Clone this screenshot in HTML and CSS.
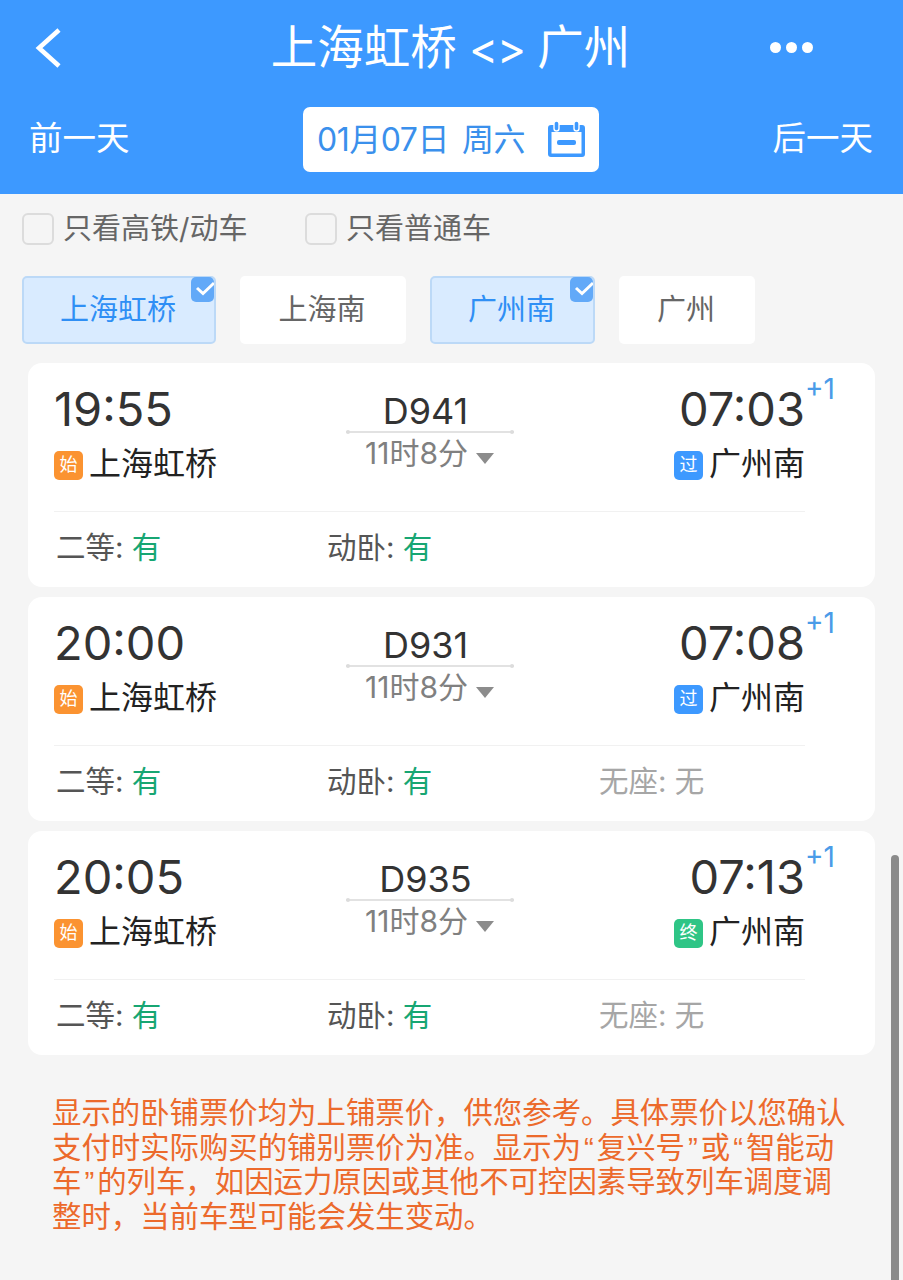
FILE: index.html
```html
<!DOCTYPE html>
<html lang="zh">
<head>
<meta charset="utf-8">
<title>上海虹桥 &lt;&gt; 广州</title>
<link rel="stylesheet" href="styles.css">
</head>
<body>
<header class="head">
  <div class="head-top">
    <svg class="back" viewBox="0 0 30 42" width="30" height="42"><path d="M26 3 L6 21 L26 39" fill="none" stroke="#fff" stroke-width="4.6"/></svg>
    <div class="title">上海虹桥 <span class="arrows">&lt;&gt;</span> 广州</div>
    <div class="more"><i></i><i></i><i></i></div>
  </div>
  <div class="head-date">
    <span class="day-link">前一天</span>
    <div class="date-box">
      <span class="date-text">01月07日<span class="week">周六</span></span>
      <svg class="cal" viewBox="0 0 37 37" width="37" height="37"><path d="M0 7 a3 3 0 0 1 3-3 h31 a3 3 0 0 1 3 3 v26 a3 3 0 0 1-3 3 h-31 a3 3 0 0 1-3-3 z M3.5 11 v21.5 h30 v-21.5 z" fill="#3d99ff" fill-rule="evenodd"/><rect x="6" y="0" width="5" height="10" rx="2.5" fill="#3d99ff" stroke="#fff" stroke-width="1.4"/><rect x="26" y="0" width="5" height="10" rx="2.5" fill="#3d99ff" stroke="#fff" stroke-width="1.4"/><rect x="9" y="19" width="19" height="5" rx="2" fill="#3d99ff"/></svg>
    </div>
    <span class="day-link">后一天</span>
  </div>
</header>

<div class="checks">
  <label class="check check-a"><i class="box"></i><span class="check-text">只看高铁/动车</span></label>
  <label class="check"><i class="box"></i><span class="check-text">只看普通车</span></label>
</div>

<div class="tags">
  <div class="tag tag-on tag-w1">上海虹桥<span class="tick"><svg viewBox="0 0 23 25" width="23" height="25"><path d="M6 11 L12 16.5 L23 6" fill="none" stroke="#fff" stroke-width="3"/></svg></span></div>
  <div class="tag tag-w2">上海南</div>
  <div class="tag tag-on tag-w3">广州南<span class="tick"><svg viewBox="0 0 23 25" width="23" height="25"><path d="M6 11 L12 16.5 L23 6" fill="none" stroke="#fff" stroke-width="3"/></svg></span></div>
  <div class="tag tag-w4">广州</div>
</div>

<main class="list">
  <article class="card">
    <div class="route">
      <div class="end">
        <div class="time">19:55</div>
        <div class="station"><b class="mark mark-o">始</b>上海虹桥</div>
      </div>
      <div class="mid">
        <div class="no">D941</div>
        <div class="rail"></div>
        <div class="dur">11时8分<i class="caret"></i></div>
      </div>
      <div class="end end-r">
        <div class="time">07:03<sup class="plus">+1</sup></div>
        <div class="station"><b class="mark mark-b">过</b>广州南</div>
      </div>
    </div>
    <div class="seats">
      <span class="seat">二等: <em>有</em></span>
      <span class="seat">动卧: <em>有</em></span>
    </div>
  </article>

  <article class="card">
    <div class="route">
      <div class="end">
        <div class="time">20:00</div>
        <div class="station"><b class="mark mark-o">始</b>上海虹桥</div>
      </div>
      <div class="mid">
        <div class="no">D931</div>
        <div class="rail"></div>
        <div class="dur">11时8分<i class="caret"></i></div>
      </div>
      <div class="end end-r">
        <div class="time">07:08<sup class="plus">+1</sup></div>
        <div class="station"><b class="mark mark-b">过</b>广州南</div>
      </div>
    </div>
    <div class="seats">
      <span class="seat">二等: <em>有</em></span>
      <span class="seat">动卧: <em>有</em></span>
      <span class="seat seat-none">无座: 无</span>
    </div>
  </article>

  <article class="card">
    <div class="route">
      <div class="end">
        <div class="time">20:05</div>
        <div class="station"><b class="mark mark-o">始</b>上海虹桥</div>
      </div>
      <div class="mid">
        <div class="no">D935</div>
        <div class="rail"></div>
        <div class="dur">11时8分<i class="caret"></i></div>
      </div>
      <div class="end end-r">
        <div class="time">07:13<sup class="plus">+1</sup></div>
        <div class="station"><b class="mark mark-g">终</b>广州南</div>
      </div>
    </div>
    <div class="seats">
      <span class="seat">二等: <em>有</em></span>
      <span class="seat">动卧: <em>有</em></span>
      <span class="seat seat-none">无座: 无</span>
    </div>
  </article>
</main>

<p class="notice">显示的卧铺票价均为上铺票价，供您参考。具体票价以您确认支付时实际购买的铺别票价为准。显示为<span class="q">“</span>复兴号<span class="q">”</span>或<span class="q">“</span>智能动车<span class="q">”</span>的列车，如因运力原因或其他不可控因素导致列车调度调整时，当前车型可能会发生变动。</p>

<div class="scrollbar"></div>
</body>
</html>
```
FILE: styles.css
```css
* { box-sizing: border-box; }
html, body { margin: 0; padding: 0; }
body {
  width: 903px;
  height: 1280px;
  overflow: hidden;
  position: relative;
  background: #f5f5f5;
  font-family: Inter, "Noto Sans CJK SC", "Noto Sans", sans-serif;
  color: #333;
}
i, em, b { font-style: normal; font-weight: 400; }

.head { height: 194px; background: #3d99ff; color: #fff; padding: 0 30px; }
.head-top { height: 107px; display: grid; grid-template-columns: 1fr auto 1fr; align-items: center; padding-bottom: 12px; }
.back { margin-left: 3px; }
.title { font-size: 46.5px; line-height: 60px; font-weight: 400; word-spacing: -1px; margin-right: 2px; }
.arrows { font-size: 44px; letter-spacing: -1px; }
.more { justify-self: end; display: flex; gap: 5px; margin-right: 60px; }
.more i { width: 11px; height: 11px; border-radius: 50%; background: #fff; }
.head-date { display: flex; justify-content: space-between; align-items: center; }
.day-link { font-size: 33.5px; line-height: 62px; height: 65px; font-weight: 400; }
.day-link:first-child { margin-left: -1px; }
.date-box {
  width: 296px; height: 65px;
  background: #fff; border-radius: 7px; color: #3a90ec;
  font-size: 32px; display: flex; align-items: center; justify-content: space-between;
  padding: 0 14px 0 14px;
}
.date-text { letter-spacing: -0.5px; padding-bottom: 5px; }
.week { margin-left: 13px; }

.checks { display: flex; padding: 19px 0 0 22px; height: 82px; }
.check { display: flex; align-items: center; height: 32px; font-size: 29px; color: #666; gap: 9px; }
.check-a { width: 283px; }
.check-text { padding-bottom: 6px; }
.box { width: 32px; height: 32px; border: 2px solid #dcdcdc; border-radius: 6px; }

.tags { display: flex; padding-left: 22px; gap: 24px; }
.tag {
  position: relative; height: 68px; border-radius: 5px; background: #fff;
  color: #666; font-size: 29px; display: flex; align-items: center; justify-content: center;
  padding: 0 2px 6px 0;
}
.tag-on { background: #d9ebff; color: #2f8ff5; border: 2px solid #bcd9f7; padding-bottom: 6px; }
.tag-w1 { width: 194px; }
.tag-w2 { width: 166px; }
.tag-w3 { width: 165px; }
.tag-w4 { width: 136px; }
.tick {
  position: absolute; top: -1px; right: 0; width: 23px; height: 25px;
  background: #62a9f8; border-radius: 5px; overflow: hidden;
}
.tick svg { display: block; }

.list { padding: 19px 28px 0; display: flex; flex-direction: column; gap: 10px; }
.card { height: 224px; background: #fff; border-radius: 14px; padding: 0 70px 0 26px; }
.route {
  height: 149px; border-bottom: 1px solid #f1f1f1;
  display: grid; grid-template-columns: 1fr 168px 1fr; padding-top: 16px;
}
.end { min-width: 0; }
.end-r { text-align: right; }
.time { position: relative; font-size: 47px; line-height: 60px; color: #333; }
.plus { position: absolute; left: 100%; top: -7px; font-size: 28px; line-height: 34px; color: #4a9be8; vertical-align: baseline; font-weight: 400; }
.end-r .time { display: inline-block; }
.station { font-size: 32px; line-height: 44px; color: #222; display: flex; align-items: center; gap: 6px; height: 44px; margin-top: 3px; }
.station .mark { margin-top: 3px; }
.end-r .station { justify-content: flex-end; }
.mark {
  width: 29px; height: 29px; border-radius: 5px; color: #fff; font-size: 18px; line-height: 27px;
  text-align: center; flex: none;
}
.mark-o { background: #fb9331; }
.mark-b { background: #3d99ff; }
.mark-g { background: #2fc586; }
.mid { text-align: center; padding-top: 11px; }
.no { font-size: 36px; line-height: 43px; height: 40px; color: #333; padding-right: 8px; }
.rail { position: relative; height: 2px; margin-top: 1px; background: #e2e2e2; }
.rail::before, .rail::after {
  content: ""; position: absolute; top: -1px; width: 4px; height: 4px; border-radius: 50%; background: #dcdcdc;
}
.rail::before { left: 0; }
.rail::after { right: 0; }
.dur { font-size: 30px; line-height: 42px; color: #808080; display: flex; align-items: center; justify-content: center; gap: 8px; margin-top: -1px; }
.caret { width: 0; height: 0; border-left: 9px solid transparent; border-right: 9px solid transparent; border-top: 11px solid #8c8c8c; margin-top: 10px; }

.seats { display: grid; grid-template-columns: 271px 272px 1fr; padding: 15px 0 0 2px; font-size: 29.5px; line-height: 40px; color: #555; }
.seat em { color: #17a673; }
.seat-none { color: #a6a6a6; }

.notice { margin: 38px 50px 0 52px; font-family: "Noto Sans CJK SC", sans-serif; font-size: 29.4px; line-height: 34.7px; color: #ec6a2c; }
.q { font-family: "Liberation Sans", sans-serif; padding: 0 3px; line-height: 0; }

.scrollbar { position: absolute; right: 4px; top: 855px; bottom: 0; width: 8px; border-radius: 4px 4px 0 0; background: #8b8b8b; }
```
